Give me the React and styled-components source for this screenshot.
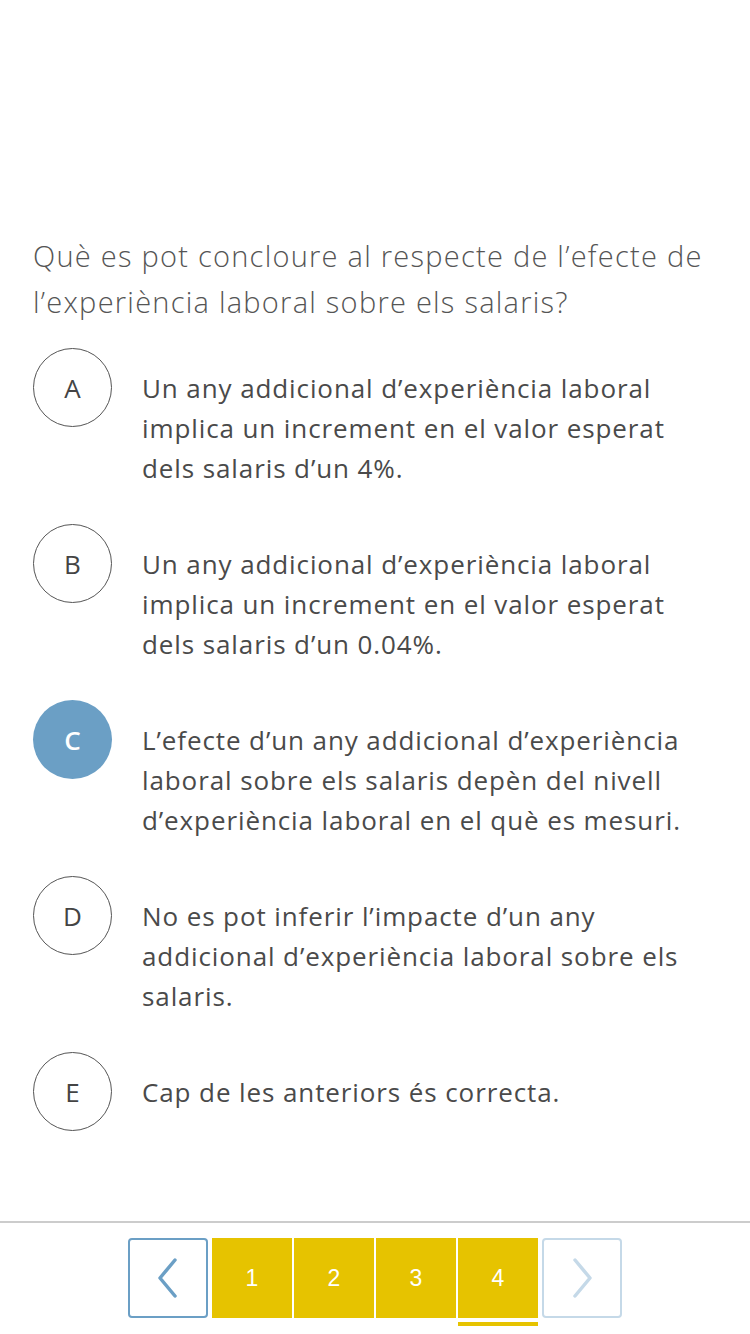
import styled, { createGlobalStyle } from "styled-components";

const GlobalStyle = createGlobalStyle`
  html, body {
    margin: 0;
    padding: 0;
    background: #fff;
  }
  body {
    font-family: "Open Sans", "Noto Sans", sans-serif;
    color: #4a4a4a;
  }
`;

const Page = styled.div`
  width: 750px;
  min-height: 1334px;
  display: flex;
  flex-direction: column;
`;

const Content = styled.div`
  padding: 233px 33px 0 33px;
`;

const Question = styled.h1`
  margin: 0 0 23px 0;
  font-size: 29px;
  font-weight: 300;
  line-height: 46px;
  letter-spacing: 1.25px;
  color: #555;
`;

const OptionList = styled.ul`
  list-style: none;
  margin: 0;
  padding: 0;
  display: flex;
  flex-direction: column;
  gap: 36px;
`;

const Option = styled.li`
  display: flex;
  align-items: flex-start;
  gap: 30px;
`;

const Bullet = styled.span`
  flex: 0 0 auto;
  box-sizing: border-box;
  width: 79px;
  height: 79px;
  border-radius: 50%;
  display: flex;
  align-items: center;
  justify-content: center;
  font-size: 26px;
  font-weight: ${(p) => (p.$selected ? 600 : 400)};
  color: ${(p) => (p.$selected ? "#fff" : "#444")};
  background: ${(p) => (p.$selected ? "#6b9fc5" : "#fff")};
  border: ${(p) => (p.$selected ? "none" : "1.5px solid #555")};
`;

const OptionText = styled.p`
  margin: 0;
  padding-top: 20px;
  width: 565px;
  font-size: 26px;
  line-height: 40px;
  letter-spacing: 0.9px;
  color: #4a4a4a;
`;

const Footer = styled.footer`
  margin-top: auto;
  border-top: 2px solid #cccccc;
  padding: 15px 0 8px;
  display: flex;
  justify-content: center;
`;

const Pager = styled.nav`
  display: flex;
  align-items: flex-start;
  gap: 2px;
`;

const ArrowButton = styled.button`
  box-sizing: border-box;
  width: 80px;
  height: 80px;
  margin: ${(p) => (p.$side === "left" ? "0 2px 0 0" : "0 0 0 2px")};
  padding: 0;
  background: #fff;
  border: 2px solid ${(p) => (p.$disabled ? "#c5d9e8" : "#6b9fc5")};
  border-radius: 4px;
  display: flex;
  align-items: center;
  justify-content: center;
`;

const PageItem = styled.div`
  display: flex;
  flex-direction: column;
  gap: 4px;
`;

const PageBox = styled.div`
  width: 80px;
  height: 80px;
  background: #e6c300;
  color: #fff;
  font-family: "Liberation Sans", Arial, sans-serif;
  font-size: 23px;
  display: flex;
  align-items: center;
  justify-content: center;
`;

const Underline = styled.div`
  height: 4px;
  background: ${(p) => (p.$active ? "#e6c300" : "transparent")};
`;

const options = [
  { key: "A", text: "Un any addicional d’experiència laboral implica un increment en el valor esperat dels salaris d’un 4%." },
  { key: "B", text: "Un any addicional d’experiència laboral implica un increment en el valor esperat dels salaris d’un 0.04%." },
  { key: "C", text: "L’efecte d’un any addicional d’experiència laboral sobre els salaris depèn del nivell d’experiència laboral en el què es mesuri.", selected: true },
  { key: "D", text: "No es pot inferir l’impacte d’un any addicional d’experiència laboral sobre els salaris." },
  { key: "E", text: "Cap de les anteriors és correcta." },
];

const Chevron = ({ dir, color }) => (
  <svg width="26" height="42" viewBox="0 0 26 42" fill="none">
    <path
      d={dir === "left" ? "M20 3 L5 21 L20 39" : "M6 3 L21 21 L6 39"}
      stroke={color}
      strokeWidth="3.5"
      strokeLinecap="round"
      strokeLinejoin="round"
    />
  </svg>
);

export default function App() {
  return (
    <>
      <GlobalStyle />
      <Page>
        <Content>
          <Question>
            Què es pot concloure al respecte de l’efecte de l’experiència laboral sobre els salaris?
          </Question>
          <OptionList>
            {options.map((o) => (
              <Option key={o.key}>
                <Bullet $selected={o.selected}>{o.key}</Bullet>
                <OptionText>{o.text}</OptionText>
              </Option>
            ))}
          </OptionList>
        </Content>
        <Footer>
          <Pager>
            <ArrowButton $side="left">
              <Chevron dir="left" color="#6b9fc5" />
            </ArrowButton>
            {[1, 2, 3, 4].map((n) => (
              <PageItem key={n}>
                <PageBox>{n}</PageBox>
                <Underline $active={n === 4} />
              </PageItem>
            ))}
            <ArrowButton $side="right" $disabled>
              <Chevron dir="right" color="#c5d9e8" />
            </ArrowButton>
          </Pager>
        </Footer>
      </Page>
    </>
  );
}
